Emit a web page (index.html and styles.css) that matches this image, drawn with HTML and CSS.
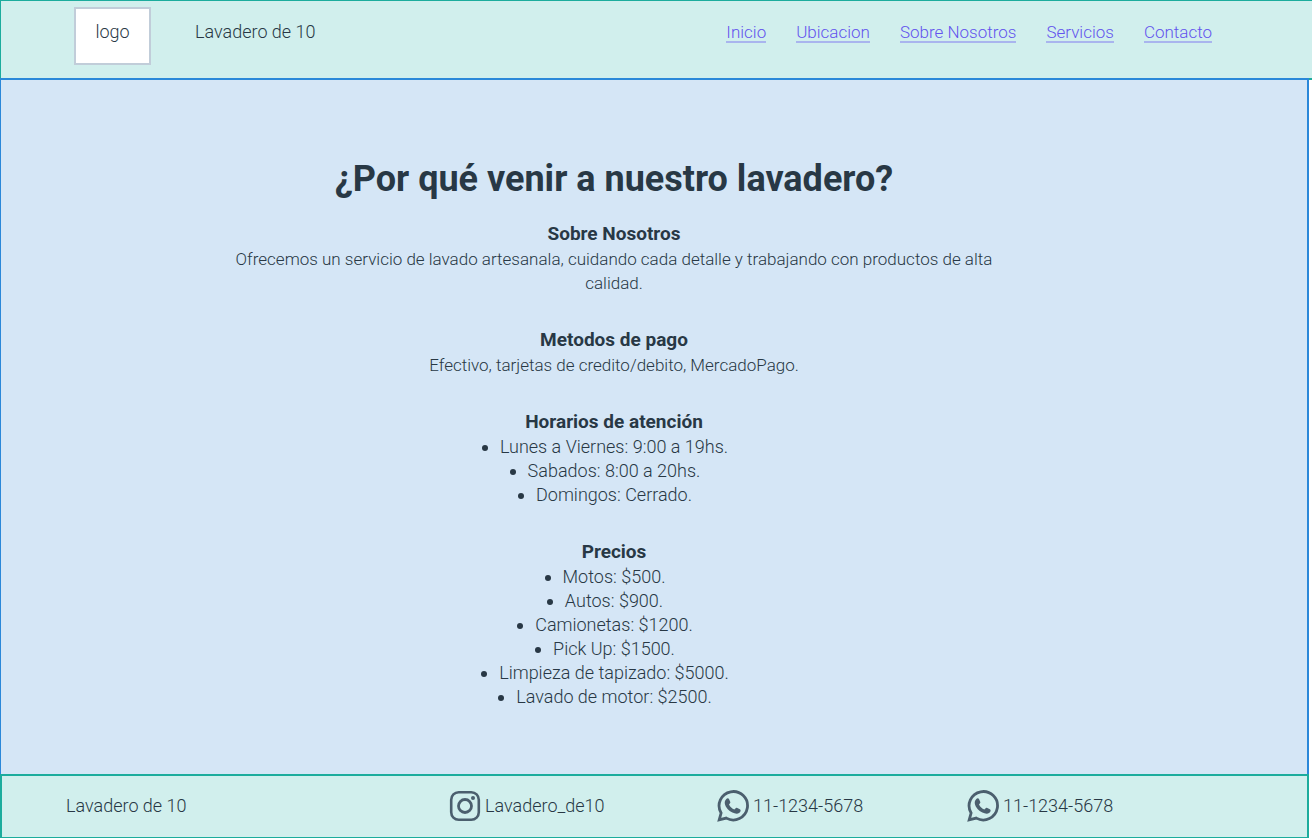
FILE: index.html
```
<!DOCTYPE html>
<html lang="es">
<head>
<meta charset="utf-8">
<title>Lavadero de 10</title>
<link rel="stylesheet" href="styles.css">
</head>
<body>
<svg class="symbols" aria-hidden="true">
  <symbol id="whatsapp" viewBox="0 0 32 32">
    <path d="M2.200 29.900l1.900-6.900A14.200 14.200 0 1 1 9.300 28.100Z" fill="none" stroke="currentColor" stroke-width="2.800"/>
    <path d="M9.300 8.900c1-.9 2.300-.8 2.800.3l1.200 2.800c.4.900-.9 1.900-1.300 2.500 1.200 2.500 3 4 5.400 5 .7-.5 1.500-2 2.400-1.700l3.100 1.500c1.400.7.600 2.700-.5 3.500-2 1.400-4.300 1-7-.2-3.700-1.700-6.700-5.300-7.400-8-.6-2.200-.2-4.300 1.300-5.700Z" fill="currentColor"/>
  </symbol>
</svg>
<header class="header">
  <div class="logo">logo</div>
  <span class="brand">Lavadero de 10</span>
  <nav class="nav">
    <a href="#inicio">Inicio</a>
    <a href="#ubicacion">Ubicacion</a>
    <a href="#nosotros">Sobre Nosotros</a>
    <a href="#servicios">Servicios</a>
    <a href="#contacto">Contacto</a>
  </nav>
</header>
<main class="main" id="inicio">
  <div class="content">
    <h1>¿Por qué venir a nuestro lavadero?</h1>
    <section id="nosotros">
      <h2>Sobre Nosotros</h2>
      <p>Ofrecemos un servicio de lavado artesanala, cuidando cada detalle y trabajando con productos de alta calidad.</p>
    </section>
    <section>
      <h2>Metodos de pago</h2>
      <p>Efectivo, tarjetas de credito/debito, MercadoPago.</p>
    </section>
    <section>
      <h2>Horarios de atención</h2>
      <ul>
        <li>Lunes a Viernes: 9:00 a 19hs.</li>
        <li>Sabados: 8:00 a 20hs.</li>
        <li>Domingos: Cerrado.</li>
      </ul>
    </section>
    <section id="servicios">
      <h2>Precios</h2>
      <ul>
        <li>Motos: $500.</li>
        <li>Autos: $900.</li>
        <li>Camionetas: $1200.</li>
        <li>Pick Up: $1500.</li>
        <li>Limpieza de tapizado: $5000.</li>
        <li>Lavado de motor: $2500.</li>
      </ul>
    </section>
  </div>
</main>
<footer class="footer" id="contacto">
  <span>Lavadero de 10</span>
  <span class="contact">
    <svg class="icon" viewBox="0 0 32 32" aria-hidden="true" fill="none" stroke="currentColor">
      <rect x="2.200" y="2.200" width="27.600" height="27.600" rx="7.500" stroke-width="2.600"/>
      <circle cx="16" cy="16" r="6.500" stroke-width="2.800"/>
      <circle cx="24" cy="8" r="2" fill="currentColor" stroke="none"/>
    </svg>
    Lavadero_de10
  </span>
  <span class="contact"><svg class="icon" aria-hidden="true"><use href="#whatsapp"/></svg>11-1234-5678</span>
  <span class="contact"><svg class="icon" aria-hidden="true"><use href="#whatsapp"/></svg>11-1234-5678</span>
</footer>
</body>
</html>
```
FILE: styles.css
```
* { box-sizing: border-box; }

body {
  display: flex;
  flex-direction: column;
  min-height: 100vh;
  margin: 0;
  background: #fff;
  color: #283845;
  font: 300 18px/24px Roboto, "Liberation Sans", sans-serif;
}

.symbols { display: none; }

.header {
  display: flex;
  align-items: flex-start;
  height: 80px;
  padding: 6px 100px 0 73px;
  background: #d1efed;
  border: 2px solid #1cac9d;
  border-width: 1px 0 2px 1px;
}

.logo {
  width: 77px;
  height: 58px;
  padding-top: 11px;
  background: #fff;
  border: 2px solid #c1cdd9;
  text-align: center;
}

.brand { padding: 13px 0 0 44px; }

.nav {
  display: flex;
  gap: 30px;
  margin-left: auto;
  padding-top: 13px;
  font-size: 17px;
}

.nav a {
  height: 23px;
  border-bottom: 2px solid #a9b5ee;
  color: #6354ee;
  text-decoration: none;
}

.main {
  flex: 1;
  margin: -2px 3px 0 0;
  padding: 75px 80px 64px 0;
  background: #d5e6f6;
  border: 2px solid #2b88d9;
  border-bottom: 0;
  border-left-width: 1px;
}

.content {
  max-width: 800px;
  margin: 0 auto;
  text-align: center;
}

h1, h2, p, ul { margin: 0; }

h1 {
  padding-bottom: 18px;
  font-size: 36px;
  line-height: 48px;
  font-weight: 700;
}

h2 {
  font-size: 19px;
  line-height: 26px;
  font-weight: 700;
}

p { font-size: 17px; }

section + section { margin-top: 32px; }

ul {
  display: flex;
  flex-direction: column;
  align-items: center;
  padding: 0;
}

.footer {
  display: grid;
  grid-template-columns: 383px 268px 250px 1fr;
  align-items: center;
  height: 64px;
  margin-right: 3px;
  padding: 0 0 1px 64px;
  background: #d1efed;
  border: 2px solid #1cac9d;
  border-bottom-width: 1px;
}

.contact {
  display: flex;
  align-items: center;
  gap: 4px;
}

.icon {
  width: 32px;
  height: 32px;
  color: #4b5f6e;
}
```
